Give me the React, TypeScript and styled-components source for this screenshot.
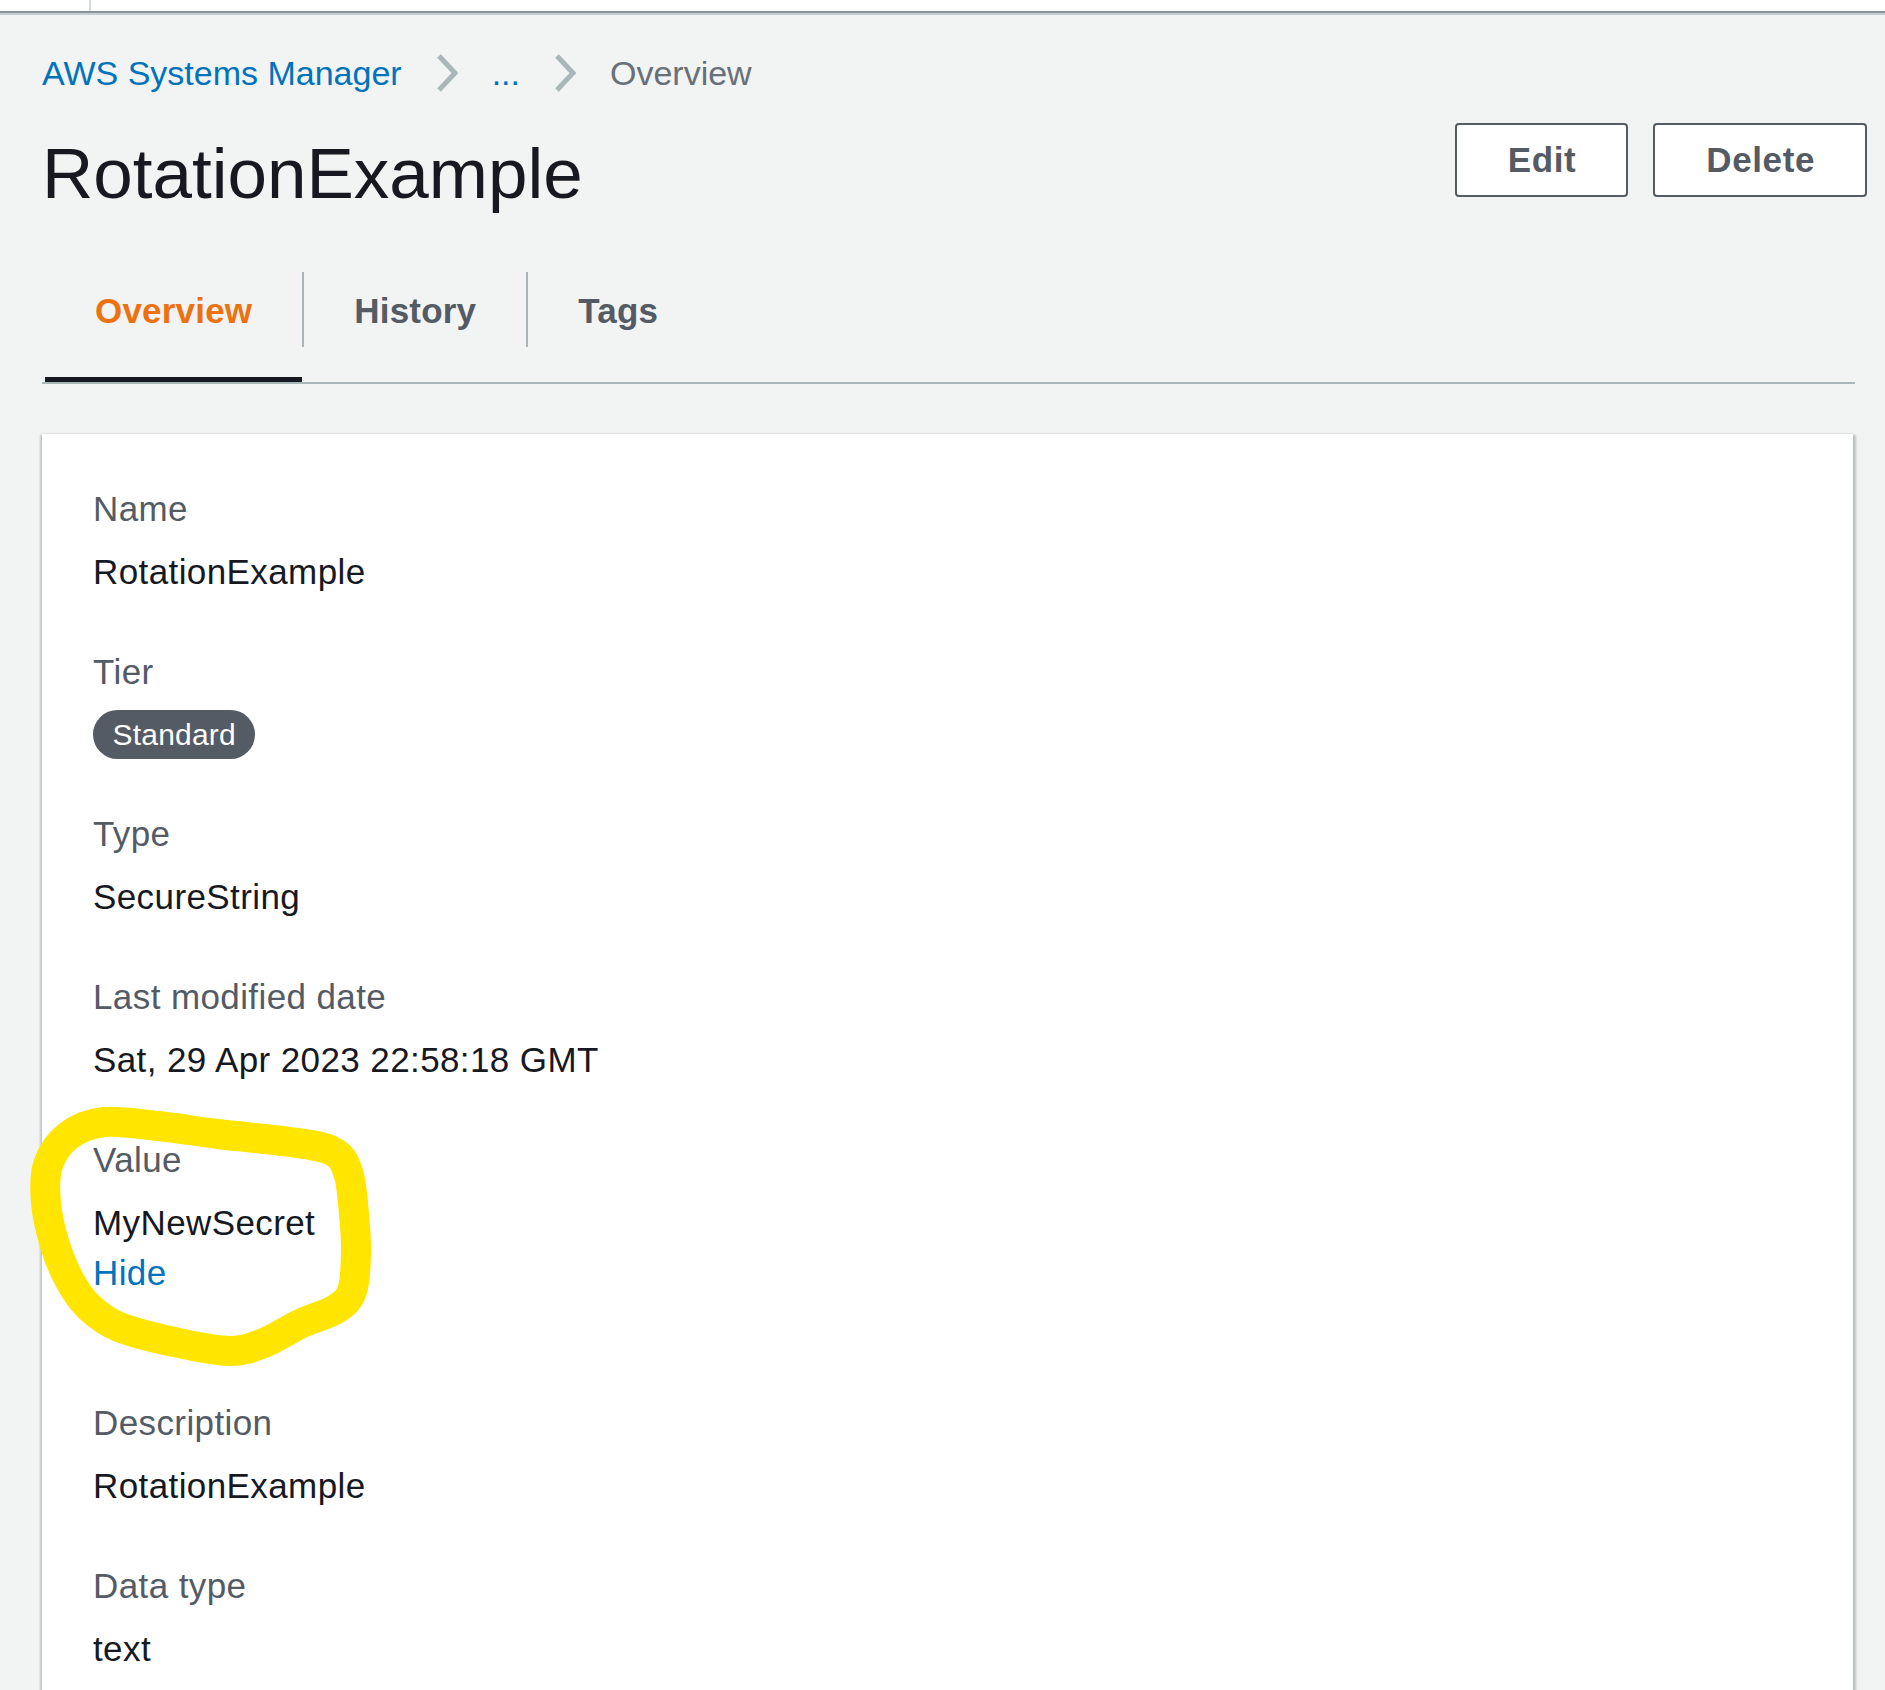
import React from 'react';
import styled, { createGlobalStyle } from 'styled-components';

const GlobalStyle = createGlobalStyle`
  html, body {
    margin: 0;
    padding: 0;
    background: #f2f3f3;
  }
  body {
    font-family: "Liberation Sans", Arial, sans-serif;
    color: #16191f;
  }
  * { box-sizing: border-box; }
`;

const TopBar = styled.div`
  display: flex;
  height: 13px;
  background: #ffffff;
  border-bottom: 2px solid #879596;
  box-shadow: 0 2px 0 #c6cfcf;
`;

const TopDivider = styled.div`
  width: 2px;
  margin-left: 89px;
  background: #d5dbdb;
`;

const Page = styled.div`
  padding: 0 18px 0 42px;
`;

const Breadcrumbs = styled.nav`
  display: flex;
  align-items: center;
  margin-top: 35px;
  height: 50px;
  font-size: 34px;
  line-height: 50px;
`;

const Crumb = styled.span<{ $current?: boolean }>`
  color: ${(p) => (p.$current ? '#687078' : '#0073bb')};
`;

const Chevron = styled.svg`
  margin: 0 34px;
  flex: none;
`;

const HeaderRow = styled.div`
  display: flex;
  justify-content: space-between;
  align-items: flex-start;
  margin-top: 25px;
`;

const Title = styled.h1`
  margin: 6px 0 0;
  font-size: 71px;
  line-height: 90px;
  font-weight: 400;
  color: #16191f;
`;

const Actions = styled.div`
  display: flex;
  gap: 25px;
`;

const Button = styled.button`
  height: 74px;
  padding: 0 50px 0 51px;
  border: 2px solid #545b64;
  border-radius: 4px;
  background: #ffffff;
  color: #545b64;
  font-family: "Liberation Sans", Arial, sans-serif;
  font-size: 35px;
  font-weight: 700;
  letter-spacing: 0.6px;
  cursor: pointer;
`;

const TabList = styled.div`
  display: flex;
  margin-top: 53px;
  margin-right: 12px;
  padding-left: 3px;
  border-bottom: 2px solid #aab7b8;
`;

const Tab = styled.div<{ $active?: boolean }>`
  padding-bottom: 30px;
  border-bottom: 5px solid ${(p) => (p.$active ? '#16191f' : 'transparent')};
  cursor: pointer;
`;

const TabLabel = styled.span<{ $active?: boolean; $divider?: boolean }>`
  display: block;
  height: 75px;
  padding: 2px 50px 0;
  line-height: 73px;
  font-size: 35px;
  font-weight: 700;
  letter-spacing: 0.2px;
  color: ${(p) => (p.$active ? '#ec7211' : '#545b64')};
  border-left: 2px solid ${(p) => (p.$divider ? '#aab7b8' : 'transparent')};
  margin-left: ${(p) => (p.$divider ? '0' : '-2px')};
`;

const Card = styled.section`
  margin-top: 50px;
  margin-right: 14px;
  padding: 50px 50px 60px 51px;
  background: #ffffff;
  letter-spacing: 0.4px;
  box-shadow: 0 -1px 2px rgba(0, 28, 36, 0.06), 3px 1px 2px rgba(0, 28, 36, 0.22),
    -2px 1px 2px rgba(0, 28, 36, 0.2);
`;

const Field = styled.div<{ $tall?: boolean }>`
  position: relative;
  margin-bottom: ${(p) => (p.$tall ? '100px' : '50px')};
  &:last-child {
    margin-bottom: 0;
  }
`;

const Label = styled.div`
  font-size: 35px;
  line-height: 50px;
  color: #545b64;
  margin-bottom: 13px;
`;

const Value = styled.div`
  font-size: 35px;
  line-height: 50px;
  color: #16191f;
`;

const Link = styled.a`
  display: block;
  font-size: 35px;
  line-height: 50px;
  color: #0073bb;
  text-decoration: none;
  cursor: pointer;
`;

const Badge = styled.span`
  display: block;
  width: fit-content;
  height: 49px;
  padding: 0 19.5px;
  border-radius: 25px;
  background: #545b64;
  color: #ffffff;
  font-size: 30px;
  line-height: 49px;
  letter-spacing: 0.2px;
`;

const Scribble = styled.svg`
  position: absolute;
  left: -73px;
  top: -46px;
  pointer-events: none;
  overflow: visible;
`;

type Pt = [number, number];

// closed catmull-rom through the hand drawn loop
const smooth = (pts: Pt[]) => {
  const n = pts.length;
  let d = `M${pts[0][0]},${pts[0][1]}`;
  for (let i = 0; i < n; i++) {
    const p0 = pts[(i - 1 + n) % n];
    const p1 = pts[i];
    const p2 = pts[(i + 1) % n];
    const p3 = pts[(i + 2) % n];
    const c1: Pt = [p1[0] + (p2[0] - p0[0]) / 6, p1[1] + (p2[1] - p0[1]) / 6];
    const c2: Pt = [p2[0] - (p3[0] - p1[0]) / 6, p2[1] - (p3[1] - p1[1]) / 6];
    d += ` C${c1[0].toFixed(1)},${c1[1].toFixed(1)} ${c2[0].toFixed(1)},${c2[1].toFixed(1)} ${p2[0]},${p2[1]}`;
  }
  return d + ' Z';
};

const loop: Pt[] = [
  [68, 1137], [104, 1123], [158, 1127], [218, 1135], [290, 1143], [332, 1152],
  [348, 1173], [354, 1215], [356, 1255], [352, 1292], [336, 1310], [300, 1325],
  [264, 1344], [229, 1352], [174, 1343], [119, 1328], [89, 1308], [70, 1282],
  [55, 1246], [46, 1204], [48, 1166],
];

const ChevronIcon = () => (
  <Chevron width="22" height="38" viewBox="0 0 22 38">
    <polyline points="3,2 19,19 3,36" fill="none" stroke="#aab7b8" strokeWidth="5" />
  </Chevron>
);

const tabs = ['Overview', 'History', 'Tags'];

export default function App() {
  return (
    <>
      <GlobalStyle />
      <TopBar>
        <TopDivider />
      </TopBar>
      <Page>
        <Breadcrumbs>
          <Crumb>AWS Systems Manager</Crumb>
          <ChevronIcon />
          <Crumb>...</Crumb>
          <ChevronIcon />
          <Crumb $current>Overview</Crumb>
        </Breadcrumbs>

        <HeaderRow>
          <Title>RotationExample</Title>
          <Actions>
            <Button>Edit</Button>
            <Button>Delete</Button>
          </Actions>
        </HeaderRow>

        <TabList>
          {tabs.map((t, i) => (
            <Tab key={t} $active={i === 0}>
              <TabLabel $active={i === 0} $divider={i > 0}>
                {t}
              </TabLabel>
            </Tab>
          ))}
        </TabList>

        <Card>
          <Field>
            <Label>Name</Label>
            <Value>RotationExample</Value>
          </Field>
          <Field>
            <Label>Tier</Label>
            <Badge>Standard</Badge>
          </Field>
          <Field>
            <Label>Type</Label>
            <Value>SecureString</Value>
          </Field>
          <Field>
            <Label>Last modified date</Label>
            <Value>Sat, 29 Apr 2023 22:58:18 GMT</Value>
          </Field>
          <Field $tall>
            <Label>Value</Label>
            <Value>MyNewSecret</Value>
            <Link>Hide</Link>
            <Scribble width="370" height="290" viewBox="20 1090 370 290">
              <path
                d={smooth(loop)}
                fill="none"
                stroke="#ffe500"
                strokeWidth="30"
                strokeLinejoin="round"
                strokeLinecap="round"
              />
            </Scribble>
          </Field>
          <Field>
            <Label>Description</Label>
            <Value>RotationExample</Value>
          </Field>
          <Field>
            <Label>Data type</Label>
            <Value>text</Value>
          </Field>
        </Card>
      </Page>
    </>
  );
}
